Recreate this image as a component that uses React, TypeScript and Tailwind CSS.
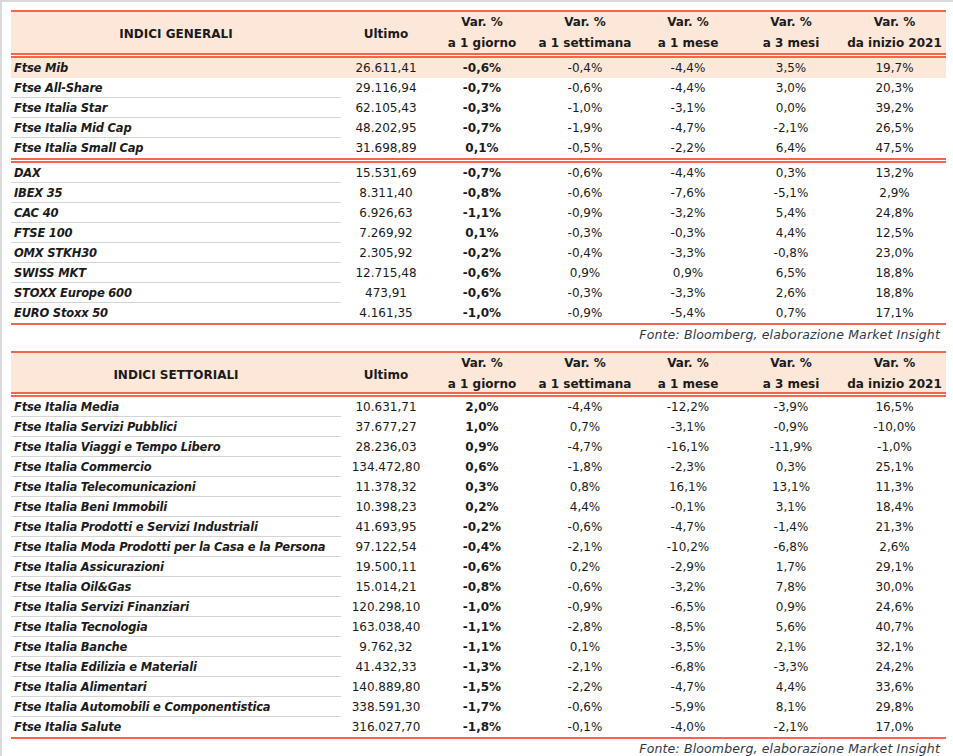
import React from "react";

type Row = [string, string, string, string, string, string, string];

const generaliA: Row[] = [
  ["Ftse Mib", "26.611,41", "-0,6%", "-0,4%", "-4,4%", "3,5%", "19,7%"],
  ["Ftse All-Share", "29.116,94", "-0,7%", "-0,6%", "-4,4%", "3,0%", "20,3%"],
  ["Ftse Italia Star", "62.105,43", "-0,3%", "-1,0%", "-3,1%", "0,0%", "39,2%"],
  ["Ftse Italia Mid Cap", "48.202,95", "-0,7%", "-1,9%", "-4,7%", "-2,1%", "26,5%"],
  ["Ftse Italia Small Cap", "31.698,89", "0,1%", "-0,5%", "-2,2%", "6,4%", "47,5%"],
];

const generaliB: Row[] = [
  ["DAX", "15.531,69", "-0,7%", "-0,6%", "-4,4%", "0,3%", "13,2%"],
  ["IBEX 35", "8.311,40", "-0,8%", "-0,6%", "-7,6%", "-5,1%", "2,9%"],
  ["CAC 40", "6.926,63", "-1,1%", "-0,9%", "-3,2%", "5,4%", "24,8%"],
  ["FTSE 100", "7.269,92", "0,1%", "-0,3%", "-0,3%", "4,4%", "12,5%"],
  ["OMX STKH30", "2.305,92", "-0,2%", "-0,4%", "-3,3%", "-0,8%", "23,0%"],
  ["SWISS MKT", "12.715,48", "-0,6%", "0,9%", "0,9%", "6,5%", "18,8%"],
  ["STOXX Europe 600", "473,91", "-0,6%", "-0,3%", "-3,3%", "2,6%", "18,8%"],
  ["EURO Stoxx 50", "4.161,35", "-1,0%", "-0,9%", "-5,4%", "0,7%", "17,1%"],
];

const settoriali: Row[] = [
  ["Ftse Italia Media", "10.631,71", "2,0%", "-4,4%", "-12,2%", "-3,9%", "16,5%"],
  ["Ftse Italia Servizi Pubblici", "37.677,27", "1,0%", "0,7%", "-3,1%", "-0,9%", "-10,0%"],
  ["Ftse Italia Viaggi e Tempo Libero", "28.236,03", "0,9%", "-4,7%", "-16,1%", "-11,9%", "-1,0%"],
  ["Ftse Italia Commercio", "134.472,80", "0,6%", "-1,8%", "-2,3%", "0,3%", "25,1%"],
  ["Ftse Italia Telecomunicazioni", "11.378,32", "0,3%", "0,8%", "16,1%", "13,1%", "11,3%"],
  ["Ftse Italia Beni Immobili", "10.398,23", "0,2%", "4,4%", "-0,1%", "3,1%", "18,4%"],
  ["Ftse Italia Prodotti e Servizi Industriali", "41.693,95", "-0,2%", "-0,6%", "-4,7%", "-1,4%", "21,3%"],
  ["Ftse Italia Moda Prodotti per la Casa e la Persona", "97.122,54", "-0,4%", "-2,1%", "-10,2%", "-6,8%", "2,6%"],
  ["Ftse Italia Assicurazioni", "19.500,11", "-0,6%", "0,2%", "-2,9%", "1,7%", "29,1%"],
  ["Ftse Italia Oil&Gas", "15.014,21", "-0,8%", "-0,6%", "-3,2%", "7,8%", "30,0%"],
  ["Ftse Italia Servizi Finanziari", "120.298,10", "-1,0%", "-0,9%", "-6,5%", "0,9%", "24,6%"],
  ["Ftse Italia Tecnologia", "163.038,40", "-1,1%", "-2,8%", "-8,5%", "5,6%", "40,7%"],
  ["Ftse Italia Banche", "9.762,32", "-1,1%", "0,1%", "-3,5%", "2,1%", "32,1%"],
  ["Ftse Italia Edilizia e Materiali", "41.432,33", "-1,3%", "-2,1%", "-6,8%", "-3,3%", "24,2%"],
  ["Ftse Italia Alimentari", "140.889,80", "-1,5%", "-2,2%", "-4,7%", "4,4%", "33,6%"],
  ["Ftse Italia Automobili e Componentistica", "338.591,30", "-1,7%", "-0,6%", "-5,9%", "8,1%", "29,8%"],
  ["Ftse Italia Salute", "316.027,70", "-1,8%", "-0,1%", "-4,0%", "-2,1%", "17,0%"],
];

const grid = "grid grid-cols-[330px_90px_102px_104px_102px_104px_103px]";

function Header({ title, h }: { title: string; h: string }) {
  const sub = ["a 1 giorno", "a 1 settimana", "a 1 mese", "a 3 mesi", "da inizio 2021"];
  return (
    <div>
      <div className="h-[2px] bg-[#f4664c]" />
      <div className={`${grid} ${h} bg-[#fce7d9] text-[12px] font-bold text-[#1b1b1b]`}>
        <div className="flex items-center justify-center pt-[1px]">{title}</div>
        <div className="flex items-center justify-center pt-[1px]">Ultimo</div>
        {sub.map((s) => (
          <div key={s} className="flex flex-col items-center justify-center whitespace-nowrap leading-[21px]">
            <span>Var. %</span>
            <span>{s}</span>
          </div>
        ))}
      </div>
      <DoubleLine />
    </div>
  );
}

function DoubleLine() {
  return (
    <div className="flex flex-col">
      <div className="h-[2px] bg-[#f4664c]" />
      <div className="h-[1px] bg-white" />
      <div className="h-[2px] bg-[#f4664c]" />
    </div>
  );
}

function DataRow({ r, hl, last }: { r: Row; hl?: boolean; last?: boolean }) {
  return (
    <div className={`${grid} h-[20px] text-[12px] text-[#1b1b1b] ${hl ? "bg-[#fce7d9]" : ""}`}>
      <div
        className={`flex items-center whitespace-nowrap pl-[3px] pt-[2px] text-[11.5px] font-bold italic tracking-[-0.2px] ${
          last || hl ? "" : "border-b border-[#d4d4d4]"
        }`}
      >
        {r[0]}
      </div>
      <div className="flex items-center justify-center">{r[1]}</div>
      <div className="flex items-center justify-center font-bold">{r[2]}</div>
      <div className="flex items-center justify-center">{r[3]}</div>
      <div className="flex items-center justify-center">{r[4]}</div>
      <div className="flex items-center justify-center">{r[5]}</div>
      <div className="flex items-center justify-center">{r[6]}</div>
    </div>
  );
}

function Footer() {
  return (
    <div className="flex h-[26px] justify-end whitespace-nowrap pr-[6px] pt-[1px] text-[12.5px] italic leading-[18px] tracking-[0.15px] text-[#303a48]">
      Fonte: Bloomberg, elaborazione Market Insight
    </div>
  );
}

export default function App() {
  return (
    <div
      className="h-[756px] w-[953px] overflow-hidden border-l-2 border-t-2 border-[#d9d9d9] bg-white"
      style={{ fontFamily: '"DejaVu Sans", "Liberation Sans", sans-serif' }}
    >
      <div className="ml-[9px] mt-[8px] w-[935px]">
        <Header title="INDICI GENERALI" h="h-[41px]" />
        {generaliA.map((r, i) => (
          <DataRow key={r[0]} r={r} hl={i === 0} last={i === generaliA.length - 1} />
        ))}
        <DoubleLine />
        {generaliB.map((r, i) => (
          <DataRow key={r[0]} r={r} last={i === generaliB.length - 1} />
        ))}
        <div className="h-[2px] bg-[#f4664c]" />
        <Footer />
        <Header title="INDICI SETTORIALI" h="h-[39px]" />
        {settoriali.map((r, i) => (
          <DataRow key={r[0]} r={r} last={i === settoriali.length - 1} />
        ))}
        <div className="h-[2px] bg-[#f4664c]" />
        <Footer />
      </div>
    </div>
  );
}
